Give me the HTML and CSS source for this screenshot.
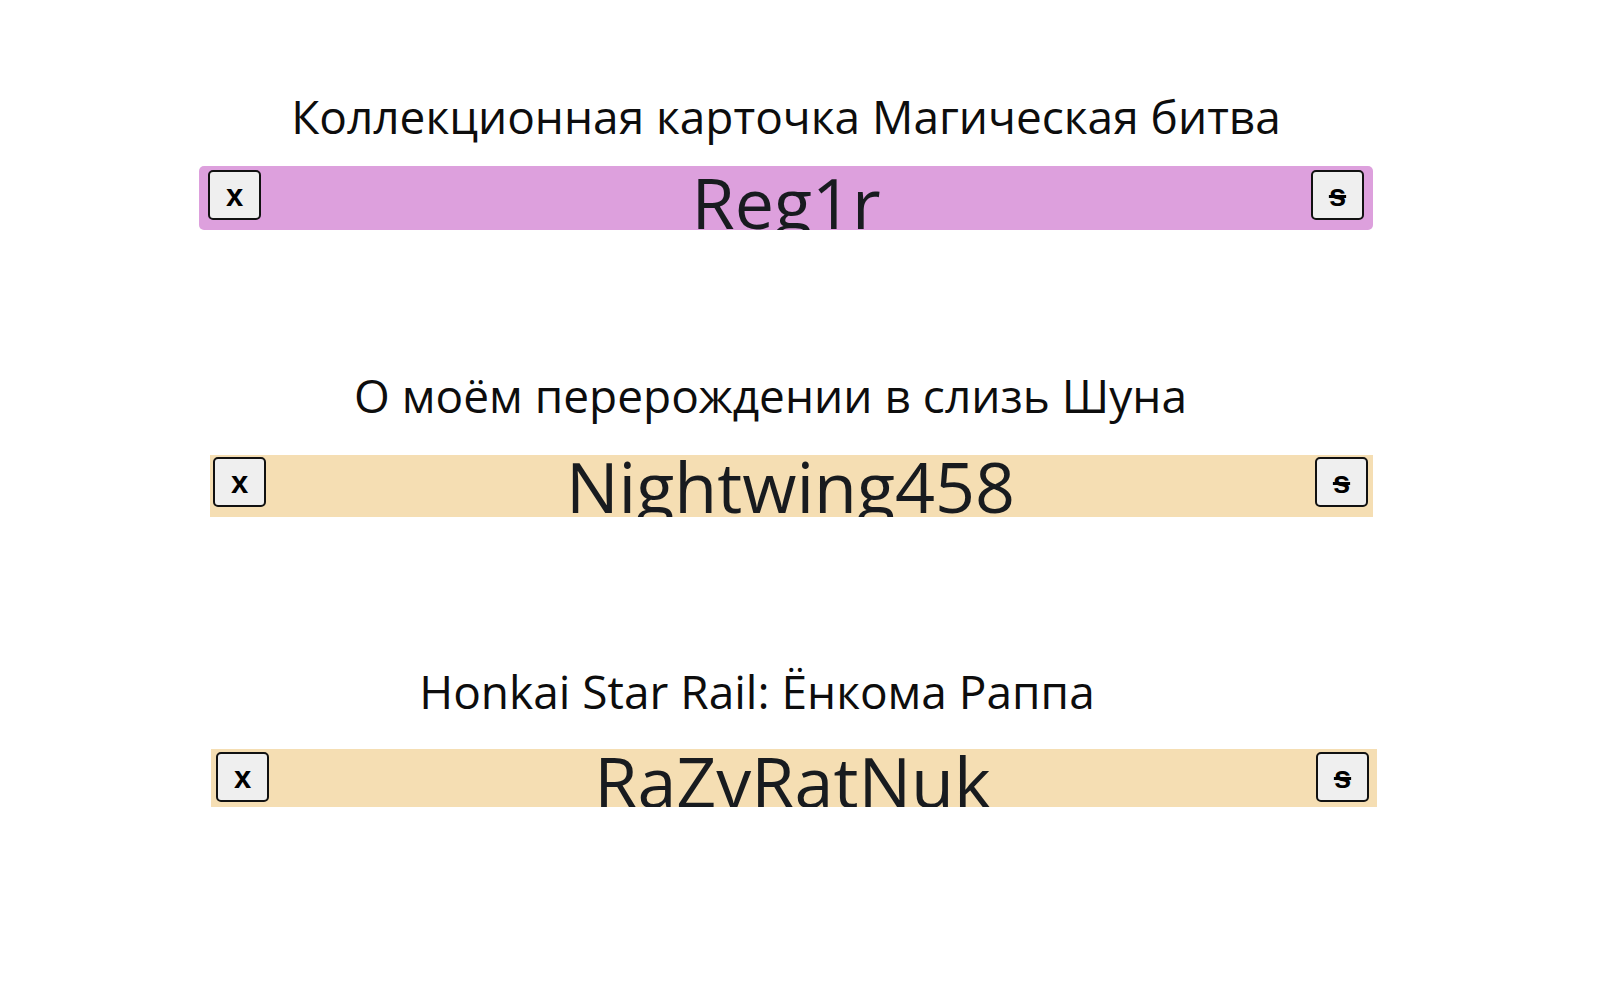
FILE: index.html
```html
<!DOCTYPE html>
<html lang="ru">
<head>
<meta charset="utf-8">
<title>Карточки</title>
<link rel="stylesheet" href="styles.css">
</head>
<body>
    <main class="list">
        <section class="card card--first">
            <h2 class="card-title">Коллекционная карточка Магическая битва</h2>
            <div class="bar bar--plum">
                <button type="button" class="bar-btn">x</button>
                <span class="bar-name">Reg1r</span>
                <button type="button" class="bar-btn"><s>s</s></button>
            </div>
        </section>

        <section class="card card--second">
            <h2 class="card-title">О моём перерождении в слизь Шуна</h2>
            <div class="bar bar--wheat">
                <button type="button" class="bar-btn">x</button>
                <span class="bar-name">Nightwing458</span>
                <button type="button" class="bar-btn"><s>s</s></button>
            </div>
        </section>

        <section class="card card--third">
            <h2 class="card-title">Honkai Star Rail: Ёнкома Раппа</h2>
            <div class="bar bar--wheat">
                <button type="button" class="bar-btn">x</button>
                <span class="bar-name">RaZvRatNuk</span>
                <button type="button" class="bar-btn"><s>s</s></button>
            </div>
        </section>
    </main>
</body>
</html>
```

FILE: styles.css
```css
body {
    margin: 0;
    background: #fff;
    font-family: "Open Sans", "Noto Sans", sans-serif;
    color: #0d0d0d;
}

.list {
    display: flex;
    flex-direction: column;
    padding-top: 88px;
}

.card-title {
    margin: 0;
    font-size: 46px;
    font-weight: normal;
    line-height: 56px;
    text-align: center;
    white-space: nowrap;
}

/* each card sits a little differently */
.card--first {
    margin-left: 199px;
    width: 1174px;
}
.card--first .card-title {
    margin-bottom: 22px;
}
.card--first .bar {
    height: 64px;
    border-radius: 5px;
    padding: 4px 9px;
}

.card--second {
    margin-top: 137px;
    margin-left: 210px;
    width: 1163px;
}
.card--second .card-title {
    padding-right: 42px;
    margin-bottom: 32px;
}
.card--second .bar {
    height: 62px;
    padding: 2px 5px 2px 3px;
}

.card--third {
    margin-top: 146px;
    margin-left: 211px;
    width: 1166px;
}
.card--third .card-title {
    padding-right: 74px;
    margin-bottom: 30px;
}
.card--third .bar {
    height: 58px;
    padding: 3px 8px 3px 5px;
}

.bar {
    box-sizing: border-box;
    display: flex;
    align-items: flex-start;
    overflow: hidden;
}

.bar--plum {
    background: #dda0dd;
}
.bar--wheat {
    background: #f5deb3;
}

.bar-name {
    flex: 1;
    margin-top: -6px;
    font-size: 70px;
    line-height: 70px;
    text-align: center;
    color: #181b1f;
    white-space: nowrap;
}
.card--first .bar-name {
    margin-top: -3px;
}

.bar-btn {
    box-sizing: border-box;
    width: 53px;
    height: 50px;
    padding: 0;
    border: 2px solid #111;
    border-radius: 5px;
    background: #efefef;
    font-family: "Liberation Sans", Arial, sans-serif;
    font-size: 31px;
    font-weight: bold;
    line-height: 1;
    color: #000;
}
```
